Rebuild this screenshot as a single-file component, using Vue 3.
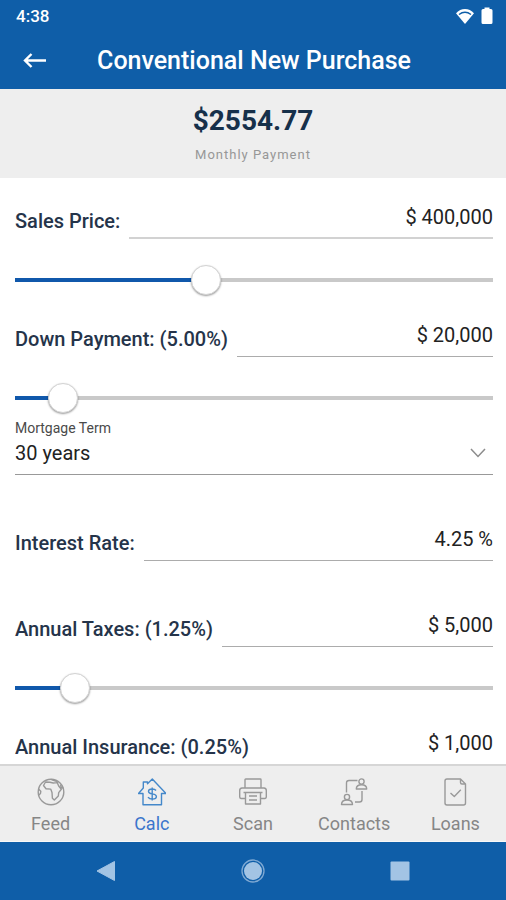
<script setup>
import { reactive, ref } from 'vue'

const payment = '$2554.77'
const term = ref('30 years')

const priceFields = reactive([
  { id: 'price', label: 'Sales Price:', value: '$ 400,000', amount: 400000, max: 1000000, idle: true },
  { id: 'down', label: 'Down Payment: (5.00%)', value: '$ 20,000', amount: 20000, max: 200000 }
])

const costFields = reactive([
  { id: 'rate', label: 'Interest Rate:', value: '4.25 %', spaced: true },
  { id: 'taxes', label: 'Annual Taxes: (1.25%)', value: '$ 5,000', amount: 5000, max: 40000, spaced: true },
  { id: 'insurance', label: 'Annual Insurance: (0.25%)', value: '$ 1,000' }
])

const fill = (field) => ({ '--fill': (field.amount / field.max) * 100 + '%' })

function updateAmount(field) {
  field.value = '$ ' + Number(field.amount).toLocaleString('en-US')
}
</script>

<template>
  <div class="app">
    <header class="top">
      <div class="status">
        <span>4:38</span>
        <span class="status-icons">
          <svg width="20" height="16" viewBox="0 0 20 16" aria-hidden="true">
            <path d="M10 16 1 5.200C3.500 2.600 6.600 1 10 1s6.500 1.600 9 4.200z" fill="#fff" />
            <path d="M4 6.500c3.700-2.700 8.300-2.700 12 0" fill="none" stroke="#0f5ea8" stroke-width="1.500" />
          </svg>
          <svg width="12" height="18" viewBox="0 0 12 18" aria-hidden="true">
            <path d="M3.500 2V.5h5V2h1.500a1.500 1.500 0 0 1 1.500 1.500v12a1.500 1.500 0 0 1-1.500 1.500H2A1.500 1.500 0 0 1 .5 15.500v-12A1.500 1.500 0 0 1 2 2z" fill="#fff" />
          </svg>
        </span>
      </div>
      <div class="bar">
        <button class="back" type="button" aria-label="Back">
          <svg width="24" height="18" viewBox="0 0 24 18" fill="none" stroke="#fff" stroke-width="2.400" aria-hidden="true">
            <path d="M23 8.500H2.500M8.500 2 2 8.500 8.500 15" />
          </svg>
        </button>
        <h1>Conventional New Purchase</h1>
      </div>
    </header>

    <section class="summary">
      <strong>{{ payment }}</strong>
      <span>Monthly Payment</span>
    </section>

    <main class="form">
      <template v-for="field in priceFields" :key="field.id">
        <div class="row">
          <label :for="field.id">{{ field.label }}</label>
          <input :id="field.id" v-model="field.value" class="value" :class="{ idle: field.idle }" type="text" size="1" />
        </div>
        <input
          v-model.number="field.amount"
          class="slider"
          type="range"
          min="0"
          :max="field.max"
          :style="fill(field)"
          :aria-label="field.label"
          @input="updateAmount(field)"
        />
      </template>

      <div class="term">
        <label for="term">Mortgage Term</label>
        <div class="select-line">
          <select id="term" v-model="term">
            <option>30 years</option>
          </select>
          <svg width="16" height="10" viewBox="0 0 16 10" fill="none" stroke="#8c8c8c" stroke-width="1.500" aria-hidden="true">
            <path d="m1 1 7 7.500L15 1" />
          </svg>
        </div>
      </div>

      <template v-for="field in costFields" :key="field.id">
        <div class="row" :class="{ spaced: field.spaced }">
          <label :for="field.id">{{ field.label }}</label>
          <input :id="field.id" v-model="field.value" class="value" type="text" size="1" />
        </div>
        <input
          v-if="field.max"
          v-model.number="field.amount"
          class="slider"
          type="range"
          min="0"
          :max="field.max"
          :style="fill(field)"
          :aria-label="field.label"
          @input="updateAmount(field)"
        />
      </template>
    </main>

    <nav class="tabs">
      <a href="#feed">
        <svg viewBox="0 0 28 28" aria-hidden="true">
          <circle cx="14" cy="14" r="12.800" />
          <path d="M13 4.300 8.500 4 6.500 7.500 9 10.700l4.700.4 1.300 3.400.4 5.700 1.900 1.800 4-4 .4-3.400 2.600-3.300-2.600-3.300-1.500-3.400-4 .4zM14.500 1.500l4 1.500 2.500 1.500M23.500 6.500l.8 3 2 .5M1.500 11l2.300 2.200-.3 2.200-1.700 1.600" />
        </svg>
        <span>Feed</span>
      </a>
      <a href="#calc" class="active" aria-current="page">
        <svg viewBox="0 0 28 28" aria-hidden="true">
          <path d="M5 15.500v11.300h18.500V15.500H28L14.300 1 9.500 5.700V4H5.300v6L.5 15.500z" />
          <path d="M18 12.500c-.7-1-2-1.500-3.800-1.500-2.300 0-3.700.9-3.700 2.400 0 3.500 7.900 1.500 7.900 5.100 0 1.700-1.600 2.600-4.100 2.600-2 0-3.500-.7-4.300-1.900M14.200 9.500v13" />
        </svg>
        <span>Calc</span>
      </a>
      <a href="#scan">
        <svg viewBox="0 0 28 28" aria-hidden="true">
          <path d="M6 9.800V1.700A.7.700 0 0 1 6.700 1h14.600a.7.700 0 0 1 .7.700v8.100M6 20.500H2A1.500 1.500 0 0 1 .7 19v-6.500a2.500 2.500 0 0 1 2.300-2.500h22a2.500 2.500 0 0 1 2.300 2.500V19a1.500 1.500 0 0 1-1.300 1.500H22M6.500 14.500h15V26h-15zM4.500 14.500h19M10 18h8M10 22h8" />
        </svg>
        <span>Scan</span>
      </a>
      <a href="#contacts">
        <svg viewBox="0 0 28 28" aria-hidden="true">
          <circle cx="21.500" cy="3.500" r="2.600" />
          <circle cx="7" cy="19" r="2.600" />
          <path d="M16.300 11c0-3 2.200-4.200 5.200-4.200s5.200 1.200 5.200 4.200zM1.500 26.500c0-3.200 2.300-4.500 5.500-4.500s5.500 1.300 5.500 4.500zM17.500 2.500H9A2.500 2.500 0 0 0 6.500 5v9.500M22 13v8.500a2.500 2.500 0 0 1-2.500 2.500H15" />
        </svg>
        <span>Contacts</span>
      </a>
      <a href="#loans">
        <svg viewBox="0 0 28 28" aria-hidden="true">
          <path d="M19.500 1H6a2 2 0 0 0-2 2v22a2 2 0 0 0 2 2h16.500a2 2 0 0 0 2-2V6zM19.500 1v3.500A1.500 1.500 0 0 0 21 6h3.500M9.500 15l3.800 3.600 6.500-6.800" />
        </svg>
        <span>Loans</span>
      </a>
    </nav>

    <div class="system">
      <button type="button" aria-label="System back">
        <svg width="24" height="24" viewBox="0 0 24 24" aria-hidden="true">
          <path d="M20.500 2.500v19L3 12z" fill="#a3c4e4" stroke="#a3c4e4" stroke-linejoin="round" />
        </svg>
      </button>
      <button type="button" aria-label="Home">
        <svg width="24" height="24" viewBox="0 0 24 24" aria-hidden="true">
          <circle cx="12" cy="12" r="9" fill="#a3c4e4" />
          <circle cx="12" cy="12" r="11" fill="none" stroke="#7fa9d3" stroke-width="1.300" />
        </svg>
      </button>
      <button type="button" aria-label="Overview">
        <svg width="24" height="24" viewBox="0 0 24 24" aria-hidden="true">
          <rect x="2.500" y="2.500" width="19" height="19" rx="1" fill="#a3c4e4" />
        </svg>
      </button>
    </div>
  </div>
</template>

<style>
body {
  margin: 0;
  background: #fff;
}
</style>

<style scoped>
.app {
  display: flex;
  flex-direction: column;
  height: 100vh;
  font-family: Roboto, "Liberation Sans", sans-serif;
  color: #222;
  background: #fff;
}

.app *,
.app {
  box-sizing: border-box;
}

button,
input,
select {
  margin: 0;
  padding: 0;
  border: 0;
  background: none;
  color: inherit;
  font: inherit;
  outline: 0;
}

svg {
  display: block;
}

.top {
  flex: none;
  background: #0f5ea8;
  color: #fff;
}

.status {
  display: flex;
  align-items: center;
  justify-content: space-between;
  height: 32px;
  padding: 0 13px 0 16px;
  font-size: 17px;
  font-weight: 500;
}

.status-icons {
  display: flex;
  align-items: center;
  gap: 6px;
}

.bar {
  display: grid;
  grid-template-columns: 70px 1fr 68px;
  align-items: center;
  height: 57px;
}

.back {
  justify-self: center;
}

h1 {
  margin: 0;
  font-size: 25px;
  font-weight: 500;
  line-height: 32px;
  text-align: center;
  white-space: nowrap;
}

.summary {
  display: flex;
  flex: none;
  flex-direction: column;
  align-items: center;
  gap: 7px;
  padding: 15px 0 13px;
  background: #eee;
}

.summary strong {
  font-size: 28px;
  font-weight: 700;
  line-height: 34px;
  color: #16304a;
}

.summary span {
  font-size: 13px;
  line-height: 20px;
  letter-spacing: 1px;
  color: #979797;
}

.form {
  flex: 1;
  min-height: 0;
  padding: 18px 13px 0 15px;
  overflow: hidden;
}

.row {
  display: flex;
  align-items: flex-end;
  gap: 9px;
}

.row.spaced {
  margin-top: 43px;
}

.row label {
  font-size: 20px;
  font-weight: 500;
  line-height: 36px;
  color: #25344a;
  white-space: nowrap;
}

.value {
  flex: 1;
  min-width: 0;
  height: 43px;
  border-bottom: 1px solid #acacac;
  font-size: 20px;
  text-align: right;
}

.value.idle {
  border-bottom: 2px solid #d2d2d2;
}

.slider {
  display: block;
  appearance: none;
  width: calc(100% + 30px);
  height: 30px;
  margin: 26px -15px 19px;
  background: linear-gradient(to right, #1058ab var(--fill), #c9c9c9 var(--fill)) center / calc(100% - 30px) 4px no-repeat;
}

.slider::-webkit-slider-thumb {
  appearance: none;
  width: 30px;
  height: 30px;
  border: 1px solid #d4d4d4;
  border-radius: 50%;
  background: #fff;
  box-shadow: 0 1px 2px rgba(0, 0, 0, 0.4);
}

.term {
  margin-top: -14px;
}

.term label {
  display: block;
  font-size: 14px;
  line-height: 20px;
  color: #4a4a4a;
}

.select-line {
  display: grid;
  grid-template-columns: 1fr auto;
  align-items: center;
  border-bottom: 1px solid #999;
}

.select-line select {
  grid-area: 1 / 1 / 2 / 3;
  appearance: none;
  height: 36px;
  padding-bottom: 6px;
  font-size: 20px;
  line-height: 30px;
}

.select-line svg {
  grid-area: 1 / 2;
  margin: 0 7px 6px 0;
  pointer-events: none;
}

.tabs {
  display: grid;
  flex: none;
  grid-template-columns: repeat(5, 1fr);
  height: 78px;
  border-top: 2px solid #d6d6d6;
  border-bottom: 1px solid #f8f8f8;
  background: #eee;
}

.tabs a {
  display: flex;
  flex-direction: column;
  align-items: center;
  gap: 6px;
  padding-top: 12px;
  font-size: 18px;
  line-height: 24px;
  color: #868686;
  text-decoration: none;
}

.tabs svg {
  width: 28px;
  height: 28px;
  fill: none;
  stroke: #999;
  stroke-width: 1.4;
  stroke-linejoin: round;
}

.tabs .active {
  color: #3b76cc;
}

.tabs .active svg {
  stroke: #4488ca;
}

.system {
  display: grid;
  flex: none;
  grid-template-columns: repeat(3, 1fr);
  align-items: center;
  justify-items: center;
  height: 58px;
  padding: 0 33px;
  background: #0f5ea8;
}
</style>
